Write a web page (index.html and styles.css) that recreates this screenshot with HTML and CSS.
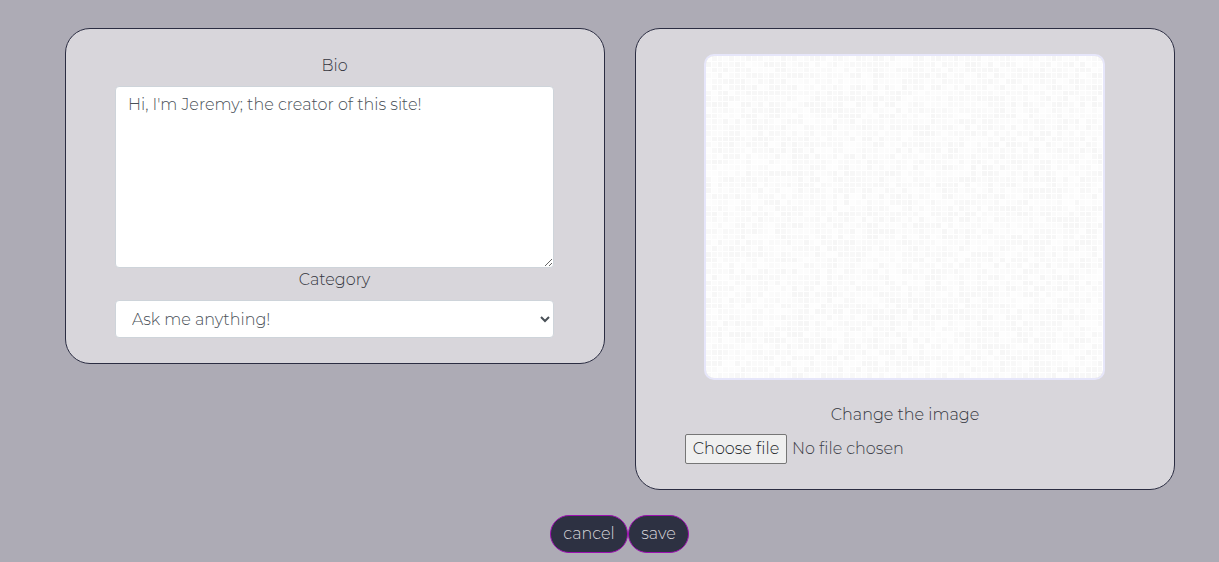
FILE: index.html
```html
<!DOCTYPE html>
<html lang="en">
<head>
<meta charset="utf-8">
<title>Edit profile</title>
<link rel="stylesheet" href="styles.css">
</head>
<body>
<form class="profile-form">
  <div class="columns">
    <section class="card details">
      <label class="label bio-label" for="bio">Bio</label>
      <textarea class="control bio" id="bio" spellcheck="false">Hi, I'm Jeremy; the creator of this site!</textarea>
      <label class="label category-label" for="category">Category</label>
      <select class="control category" id="category"><option>Ask me anything!</option></select>
    </section>
    <section class="card picture">
      <canvas class="preview" id="preview" width="397" height="322"></canvas>
      <div class="label image-label">Change the image</div>
      <div class="file-row">
        <button class="file-button" type="button">Choose file</button>
        <span class="file-name">No file chosen</span>
      </div>
    </section>
  </div>
  <div class="actions">
    <button class="pill cancel" type="button">cancel</button><button class="pill save" type="button">save</button>
  </div>
</form>
<script src="script.js"></script>
</body>
</html>
```

FILE: styles.css
```css
* { box-sizing: border-box; }
body {
  margin: 0;
  height: 562px;
  overflow: hidden;
  background: #adabb5;
  color: #35373f;
  font: 300 16px/24px Montserrat, Inter, "Open Sans", sans-serif;
}
.profile-form { padding: 28px 44px 0 65px; }
.columns { display: flex; align-items: flex-start; gap: 30px; }
.card {
  width: 540px;
  display: flex;
  flex-direction: column;
  border: 1px solid #2b2d42;
  border-radius: 25px;
  background: #d8d6db;
}
.details { height: 336px; padding: 25px 50px 0 49px; }
.picture { height: 462px; padding: 25px 49px 0; }
.label { display: block; height: 24px; text-align: center; white-space: nowrap; }
.bio-label { margin-bottom: 8px; }
.category-label { margin-bottom: 8px; }
.control {
  display: block;
  width: 439px;
  border: 1px solid #ced4da;
  border-radius: 4px;
  background: #fff;
  color: #495057;
  font: inherit;
}
.bio { height: 182px; padding: 6px 12px; resize: vertical; }
.category { width: 438.6px; height: 38px; padding: 6px 12px; }
.preview {
  width: 401px;
  height: 326px;
  margin-left: 19px;
  border: 2px solid #e6e6fa;
  border-radius: 10px;
}
.image-label { margin-top: 23px; }
.file-row { display: flex; align-items: center; height: 30px; margin-top: 7px; gap: 5px; white-space: nowrap; }
.file-button {
  width: 102px;
  height: 30px;
  padding: 0;
  border: 1px solid #767676;
  border-radius: 2px;
  background: #efefef;
  color: #212529;
  font: inherit;
}
.file-name { color: #3c4048; }
.actions { display: flex; justify-content: center; padding-top: 25px; margin-left: -1px; }
.pill {
  height: 38px;
  padding: 0;
  border: 1px solid #9c0fb0;
  border-radius: 19px;
  background: #2d3142;
  color: #d8d6db;
  font: inherit;
}
.cancel { width: 78px; }
.save { width: 61px; }
```

FILE: script.js
```js
const canvas = document.getElementById("preview");
const ctx = canvas.getContext("2d");
const pitch = 5.76;
let seed = 4217;
function random() {
  seed = (seed * 16807) % 2147483647;
  return seed / 2147483647;
}
ctx.fillStyle = "#ffffff";
ctx.fillRect(0, 0, canvas.width, canvas.height);
// Pale mosaic of small tiles, one pixel of white between them
for (let row = 0; row * pitch < canvas.height; row++) {
  for (let col = 0; col * pitch < canvas.width; col++) {
    const x = Math.round(col * pitch);
    const y = Math.round(row * pitch);
    const w = Math.round((col + 1) * pitch) - x - 1;
    const h = Math.round((row + 1) * pitch) - y - 1;
    const shade = 253 - Math.floor(random() * 8);
    ctx.fillStyle = `rgb(${shade},${shade},${shade})`;
    ctx.fillRect(x, y, w, h);
  }
}
```
